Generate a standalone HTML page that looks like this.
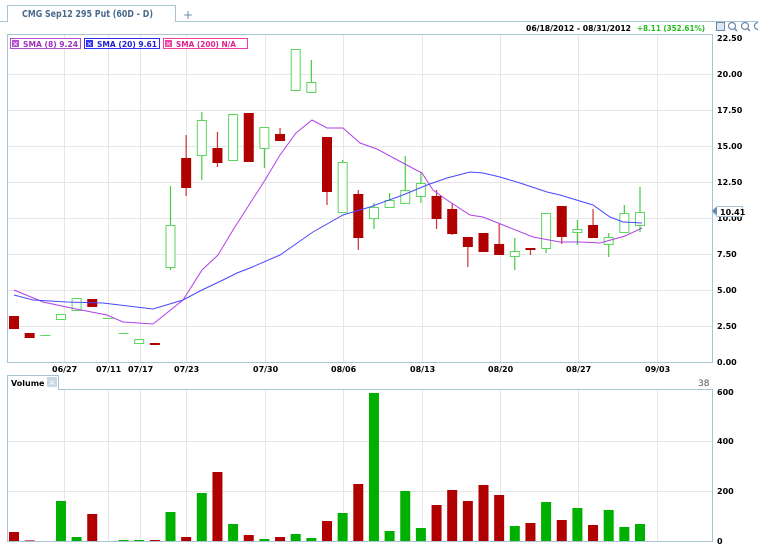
<!DOCTYPE html>
<html><head><meta charset="utf-8">
<style>
html,body{margin:0;padding:0;background:#fff;width:758px;height:560px;overflow:hidden;font-family:"Liberation Sans",sans-serif}
svg text{font-family:"DejaVu Sans","Liberation Sans",sans-serif}
</style></head><body>
<svg id="s" width="758" height="560" viewBox="0 0 758 560" xmlns="http://www.w3.org/2000/svg">
<!-- tab -->
<path d="M0 21.5 H7.5 V5.5 H175.5 V21.5 H758" fill="none" stroke="#a8c4d4"/>
<text x="22" y="17" font-size="9.5" font-weight="bold" fill="#4a6a8a" textLength="131" lengthAdjust="spacingAndGlyphs">CMG Sep12 295 Put (60D - D)</text>
<text x="183" y="19" font-size="12" fill="#6a8aa8">+</text>
<!-- header -->
<text x="526" y="31" font-size="8" font-weight="bold" fill="#000" textLength="105" lengthAdjust="spacingAndGlyphs">06/18/2012 - 08/31/2012</text>
<text x="637" y="31" font-size="8" font-weight="bold" fill="#22bb22" textLength="68" lengthAdjust="spacingAndGlyphs">+8.11 (352.61%)</text>
<rect x="716.5" y="22.5" width="8" height="8" fill="#dde8f0" stroke="#6a8aa8"/>
<circle cx="732" cy="26" r="3.5" fill="none" stroke="#6a8aa8" stroke-width="1.2"/><line x1="734.5" y1="28.5" x2="737" y2="31" stroke="#6a8aa8" stroke-width="1.5"/>
<circle cx="745" cy="26" r="3.5" fill="none" stroke="#6a8aa8" stroke-width="1.2"/><line x1="747.5" y1="28.5" x2="750" y2="31" stroke="#6a8aa8" stroke-width="1.5"/>
<circle cx="758" cy="26" r="3.5" fill="none" stroke="#6a8aa8" stroke-width="1.2"/>
<g id="grid"></g>
<!-- price box -->
<rect x="7.5" y="34.5" width="705" height="328" fill="none" stroke="#a8c4d4"/>
<!-- legend -->
<rect x="10.5" y="38.5" width="70" height="10" fill="#fff" stroke="#b050d0"/>
<rect x="12" y="40" width="7" height="7" fill="#b050d0"/><text x="12.5" y="46.5" font-size="7" fill="#fff">✕</text>
<text x="23" y="47" font-size="8" font-weight="bold" fill="#a030c0" textLength="55" lengthAdjust="spacingAndGlyphs">SMA (8) 9.24</text>
<rect x="84.5" y="38.5" width="75" height="10" fill="#fff" stroke="#3030f0"/>
<rect x="86" y="40" width="7" height="7" fill="#3030f0"/><text x="86.5" y="46.5" font-size="7" fill="#fff">✕</text>
<text x="97" y="47" font-size="8" font-weight="bold" fill="#2020d0" textLength="60" lengthAdjust="spacingAndGlyphs">SMA (20) 9.61</text>
<rect x="163.5" y="38.5" width="84" height="10" fill="#fff" stroke="#f040a0"/>
<rect x="165" y="40" width="7" height="7" fill="#f040a0"/><text x="165.5" y="46.5" font-size="7" fill="#fff">✕</text>
<text x="176" y="47" font-size="8" font-weight="bold" fill="#e02090" textLength="60" lengthAdjust="spacingAndGlyphs">SMA (200) N/A</text>
<!-- right axis -->
<g font-size="8" font-weight="bold" fill="#000">
<text x="717" y="41">22.50</text><text x="717" y="77">20.00</text><text x="717" y="113">17.50</text>
<text x="717" y="149">15.00</text><text x="717" y="185">12.50</text><text x="717" y="221">10.00</text>
<text x="717" y="257">7.50</text><text x="717" y="293">5.00</text><text x="717" y="329">2.50</text><text x="717" y="365">0.00</text>
<text x="52" y="372">06/27</text><text x="96" y="372">07/11</text><text x="128" y="372">07/17</text>
<text x="174" y="372">07/23</text><text x="253" y="372">07/30</text><text x="331" y="372">08/06</text>
<text x="410" y="372">08/13</text><text x="488" y="372">08/20</text><text x="566" y="372">08/27</text><text x="645" y="372">09/03</text>
<text x="717" y="395">600</text><text x="717" y="444">400</text><text x="717" y="494">200</text><text x="717" y="544">0</text>
</g>
<path d="M712 211 L717 206.5 H742.5 V216.5 H717 Z" fill="#fff" stroke="#a8c4d4"/>
<path d="M712 211 L717 207 V215 Z" fill="#6a8aa8"/>
<text x="720" y="215" font-size="8" font-weight="bold" fill="#000">10.41</text>
<!-- volume -->
<path d="M7.5 390.5 V375.5 H58.5 V389.5 H712.5 V541.5 H7.5 V390" fill="none" stroke="#a8c4d4"/>
<text x="11" y="386" font-size="8" font-weight="bold" fill="#000">Volume</text>
<rect x="47" y="377" width="10" height="10" fill="#c8d8e4"/><text x="48.5" y="385.5" font-size="8" fill="#fff">✕</text>
<text x="698" y="386" font-size="9" fill="#555">38</text>
<g id="c"></g>
</svg>
<script>
var ns="http://www.w3.org/2000/svg",g=document.getElementById('c'),gr=document.getElementById('grid');
function el(p,t,a){var e=document.createElementNS(ns,t);for(var k in a)e.setAttribute(k,a[k]);p.appendChild(e);return e;}
[74,110,146,182,218,254,290,326].forEach(function(y){el(gr,'line',{x1:8,x2:712,y1:y+.5,y2:y+.5,stroke:'#e6e6e6'})});
[441,491].forEach(function(y){el(gr,'line',{x1:8,x2:712,y1:y+.5,y2:y+.5,stroke:'#e6e6e6'})});
[64,108,140,186,265,343,422,500,578,657].forEach(function(x){el(gr,'line',{x1:x+.5,x2:x+.5,y1:35,y2:362,stroke:'#e6e6e6'});el(gr,'line',{x1:x+.5,x2:x+.5,y1:390,y2:541,stroke:'#e6e6e6'})});
function X(i){return 14+15.65*i;}
var C=[[0,'r',316,329],[1,'r',333,338],[2,'l',335,335],[3,'g',314,319],[4,'g',298,310],[5,'r',299,307],[6,'l',318,318],[7,'l',333,333],[8,'g',339,343],[9,'r',343,344],
[10,'g',225,267,186,270],[11,'r',158,188,135,196],[12,'g',120,155,112,180],[13,'r',148,163,132,167],[14,'g',114,160],[15,'r',113,162],[16,'g',127,148,127,168],[17,'r',134,141,128,141],[18,'g',49,90,49,91],[19,'g',82,92,60,92],
[20,'r',137,192,137,205],[21,'g',162,212,160,212],[22,'r',194,238,190,250],[23,'g',207,218,203,229],[24,'g',200,207,193,207],[25,'g',190,203,156,203],[26,'g',183,196,172,203],[27,'r',196,219,190,229],[28,'r',209,234,203,235],[29,'r',237,247,237,267],
[30,'r',233,252],[31,'r',244,255,224,255],[32,'g',251,256,238,270],[33,'r',248,250,248,255],[34,'g',213,248,213,253],[35,'r',206,237,206,244],[36,'g',229,232,220,245],[37,'r',225,238,209,238],[38,'g',237,244,233,257],[39,'g',213,232,205,232],[40,'g',212,225,187,232]];
C.forEach(function(c){var x=X(c[0]),col=c[1]=='r'?'#b00000':'#5cd65c';
 if(c[4]!==undefined)el(g,'line',{x1:x,x2:x,y1:c[4],y2:c[5],stroke:c[1]=='r'?'#d03030':'#44cc44','stroke-width':1.2});
 if(c[1]=='l')el(g,'line',{x1:x-5,x2:x+5,y1:c[2]+.5,y2:c[2]+.5,stroke:'#5cd65c'});
 else if(c[1]=='r')el(g,'rect',{x:x-5,y:c[2],width:10,height:Math.max(2,c[3]-c[2]),fill:'#b00000'});
 else el(g,'rect',{x:x-4.5,y:c[2]+.5,width:9,height:Math.max(1,c[3]-c[2]),fill:'#fff',stroke:col});
});
function line(pts,col){el(g,'polyline',{points:pts,fill:'none',stroke:col,'stroke-width':1});}
line("14,290 43,302 76,309 107,315 123,322 153,324 183,300 202,270 218,255 233,230 249,205 265,180 280,155 296,133 312,120 327,128 343,128 360,143 377,149 403,163 422,173 433,190 447,200 470,215 483,217 503,225 533,237 560,242 580,242 600,243 625,236 642,228",'#b040e8');
line("14,295 33,300 67,302 103,303 153,309 183,300 202,290 223,280 237,273 250,268 280,255 313,232 343,215 370,207 403,195 427,185 447,178 470,172 483,173 500,177 520,183 547,192 560,195 593,205 610,217 623,222 642,223",'#4848ff');
var V=[[0,'r',532],[1,'p',540],[3,'g',501],[4,'g',537],[5,'r',514],[7,'g',540],[8,'g',540],[9,'r',540],[10,'g',512],[11,'r',537],[12,'g',493],[13,'r',472],[14,'g',524],[15,'r',535],[16,'g',539],[17,'r',537],[18,'g',534],[19,'g',538],[20,'r',521],[21,'g',513],[22,'r',484],[23,'g',393],
[24,'g',531],[25,'g',491],[26,'g',528],[27,'r',505],[28,'r',490],[29,'r',501],[30,'r',485],[31,'r',495],[32,'g',526],[33,'r',523],[34,'g',502],[35,'r',520],[36,'g',508],[37,'r',525],[38,'g',510],[39,'g',527],[40,'g',524]];
V.forEach(function(v){el(g,'rect',{x:X(v[0])-5,y:v[2],width:10,height:541-v[2],fill:v[1]=='r'?'#b00000':v[1]=='p'?'#d06070':'#00b000'});});
</script>
</body></html>
